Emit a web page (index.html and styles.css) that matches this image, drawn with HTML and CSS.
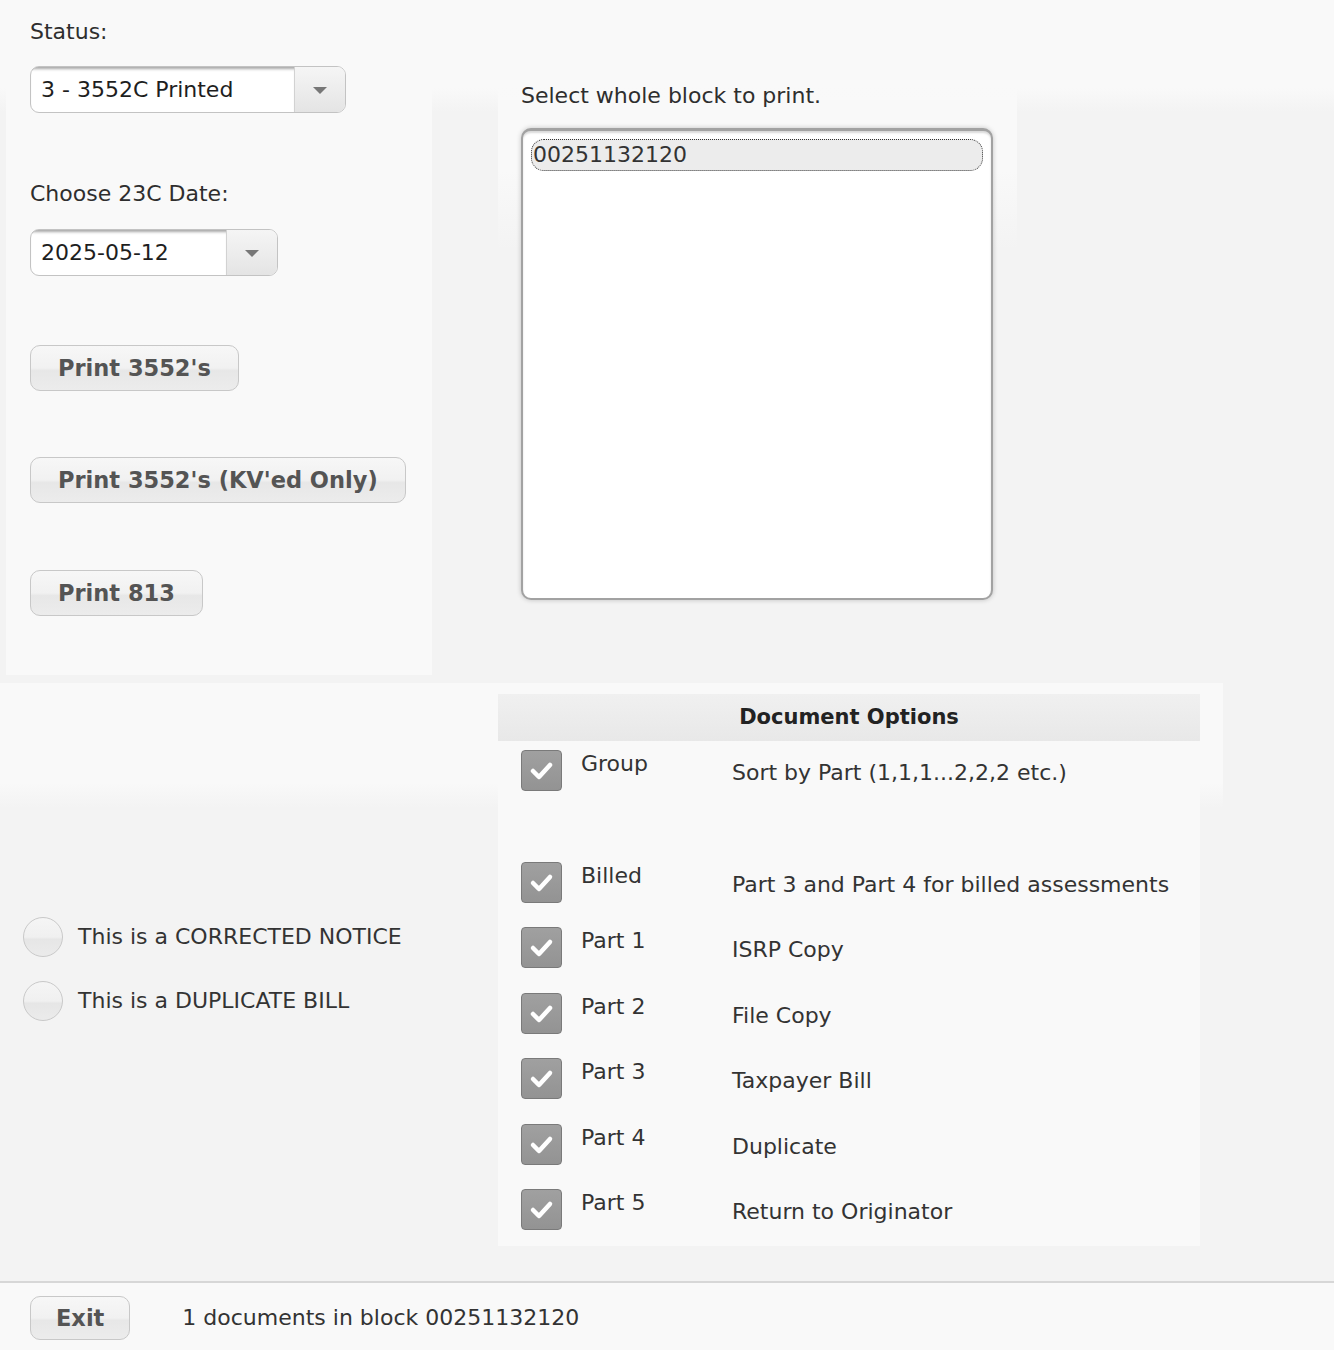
FILE: index.html
```html
<!DOCTYPE html>
<html>
<head>
<meta charset="utf-8">
<link rel="stylesheet" href="styles.css">
</head>
<body>
<div class="page">
  <div class="upper">
    <section class="left-panel">
      <div class="label label-status">Status:</div>
      <div class="select select-status">
        <span class="select-value">3 - 3552C Printed</span>
        <span class="select-arrow"><svg width="16" height="8" viewBox="0 0 16 8"><path d="M1 0 L15 0 L8 7 Z" fill="#777"/></svg></span>
      </div>
      <div class="label label-date">Choose 23C Date:</div>
      <div class="select select-date">
        <span class="select-value">2025-05-12</span>
        <span class="select-arrow"><svg width="16" height="8" viewBox="0 0 16 8"><path d="M1 0 L15 0 L8 7 Z" fill="#777"/></svg></span>
      </div>
      <button class="btn btn-first">Print 3552's</button>
      <button class="btn btn-gap">Print 3552's (KV'ed Only)</button>
      <button class="btn btn-gap3">Print 813</button>
    </section>
    <section class="block-panel">
      <div class="label">Select whole block to print.</div>
      <div class="listbox">
        <div class="list-item">00251132120</div>
      </div>
    </section>
  </div>

  <div class="middle">
    <div class="radios">
      <label class="radio-row"><span class="radio"></span><span>This is a CORRECTED NOTICE</span></label>
      <label class="radio-row"><span class="radio"></span><span>This is a DUPLICATE BILL</span></label>
    </div>
    <div class="doc-options">
      <div class="doc-header">Document Options</div>
      <div class="opt-row opt-group">
        <span class="check"><svg width="41" height="41" viewBox="0 0 41 41"><path d="M12 21 L18 27 L29 15" fill="none" stroke="#fff" stroke-width="4.5" stroke-linecap="round" stroke-linejoin="round"/></svg></span>
        <span class="opt-name">Group</span>
        <span class="opt-desc">Sort by Part (1,1,1...2,2,2 etc.)</span>
      </div>
      <div class="opt-row">
        <span class="check"><svg width="41" height="41" viewBox="0 0 41 41"><path d="M12 21 L18 27 L29 15" fill="none" stroke="#fff" stroke-width="4.5" stroke-linecap="round" stroke-linejoin="round"/></svg></span>
        <span class="opt-name">Billed</span>
        <span class="opt-desc">Part 3 and Part 4 for billed assessments</span>
      </div>
      <div class="opt-row">
        <span class="check"><svg width="41" height="41" viewBox="0 0 41 41"><path d="M12 21 L18 27 L29 15" fill="none" stroke="#fff" stroke-width="4.5" stroke-linecap="round" stroke-linejoin="round"/></svg></span>
        <span class="opt-name">Part 1</span>
        <span class="opt-desc">ISRP Copy</span>
      </div>
      <div class="opt-row">
        <span class="check"><svg width="41" height="41" viewBox="0 0 41 41"><path d="M12 21 L18 27 L29 15" fill="none" stroke="#fff" stroke-width="4.5" stroke-linecap="round" stroke-linejoin="round"/></svg></span>
        <span class="opt-name">Part 2</span>
        <span class="opt-desc">File Copy</span>
      </div>
      <div class="opt-row">
        <span class="check"><svg width="41" height="41" viewBox="0 0 41 41"><path d="M12 21 L18 27 L29 15" fill="none" stroke="#fff" stroke-width="4.5" stroke-linecap="round" stroke-linejoin="round"/></svg></span>
        <span class="opt-name">Part 3</span>
        <span class="opt-desc">Taxpayer Bill</span>
      </div>
      <div class="opt-row">
        <span class="check"><svg width="41" height="41" viewBox="0 0 41 41"><path d="M12 21 L18 27 L29 15" fill="none" stroke="#fff" stroke-width="4.5" stroke-linecap="round" stroke-linejoin="round"/></svg></span>
        <span class="opt-name">Part 4</span>
        <span class="opt-desc">Duplicate</span>
      </div>
      <div class="opt-row opt-last">
        <span class="check"><svg width="41" height="41" viewBox="0 0 41 41"><path d="M12 21 L18 27 L29 15" fill="none" stroke="#fff" stroke-width="4.5" stroke-linecap="round" stroke-linejoin="round"/></svg></span>
        <span class="opt-name">Part 5</span>
        <span class="opt-desc">Return to Originator</span>
      </div>
    </div>
  </div>

  <footer class="footer">
    <button class="btn btn-exit">Exit</button>
    <span class="footer-text">1 documents in block 00251132120</span>
  </footer>
</div>
</body>
</html>
```

FILE: styles.css
```css
* { box-sizing: border-box; }

html, body {
  margin: 0;
  padding: 0;
}

body {
  background: #f3f3f3;
  font-family: "DejaVu Sans", "Liberation Sans", sans-serif;
  font-size: 22px;
  line-height: 26px;
  color: #2e2e2e;
}

.page {
  width: 1334px;
  height: 1350px;
  overflow: hidden;
}

/* ---------- upper area ---------- */
.upper {
  display: flex;
  height: 683px;
  background: linear-gradient(to bottom, #f9f9f9 0, #f9f9f9 88px, #f3f3f3 112px);
}

.left-panel {
  margin-left: 6px;
  width: 426px;
  height: 675px;
  background: #f9f9f9;
  padding: 19px 0 0 24px;
  display: flex;
  flex-direction: column;
  align-items: flex-start;
}

.label {
  color: #2e2e2e;
  white-space: nowrap;
}

.label-date { margin-top: 68px; }

.select {
  display: flex;
  height: 47px;
  margin-top: 21px;
  background: #fff;
  border: 1px solid #c3c3c3;
  border-radius: 9px;
  overflow: hidden;
}

.select-date { margin-top: 22px; }

.select-status { width: 316px; }
.select-date { width: 248px; }

.select-value {
  flex: 1;
  padding-left: 10px;
  display: flex;
  align-items: center;
  color: #1e1e1e;
  box-shadow: inset 0 4px 3px -2px rgba(0, 0, 0, 0.35);
}

.select-arrow {
  width: 51px;
  display: flex;
  align-items: center;
  justify-content: center;
  border-left: 1px solid #d2d2d2;
  background: linear-gradient(to bottom, #f5f5f5 0%, #ececec 55%, #e4e4e4 100%);
}

.select-arrow svg { display: block; margin-top: 2px; }

.btn {
  font-family: "DejaVu Sans", "Liberation Sans", sans-serif;
  font-size: 22.5px;
  font-weight: bold;
  color: #545454;
  height: 46px;
  padding: 0 27px;
  border: 1px solid #c8c8c8;
  border-radius: 10px;
  background: linear-gradient(to bottom, #f7f7f7 0%, #f1f1f1 50%, #e7e7e7 56%, #ececec 100%);
  line-height: 44px;
  white-space: nowrap;
  cursor: pointer;
}

.btn-first { margin-top: 69px; }
.btn-gap { margin-top: 66px; }
.btn-gap3 { margin-top: 67px; }

/* ---------- block list ---------- */
.block-panel {
  margin-left: 66px;
  width: 519px;
  height: 300px;
  padding: 83px 0 0 23px;
  background: linear-gradient(to bottom, rgba(249,249,249,0) 0, #f9f9f9 100px, #f9f9f9 170px, rgba(249,249,249,0) 250px);
}

.listbox {
  margin-top: 19px;
  width: 472px;
  height: 472px;
  background: #fff;
  border: 2px solid #a2a2a2;
  border-top-width: 3px;
  border-radius: 10px;
  box-shadow: 0 0 5px rgba(0, 0, 0, 0.22), inset 0 2px 2px rgba(0, 0, 0, 0.15);
  padding: 8px 8px 0 8px;
}

.list-item {
  height: 32px;
  line-height: 30px;
  padding-left: 1px;
  background: #ececec;
  border: 1px dotted #333;
  border-radius: 13px;
  color: #333;
}

/* ---------- middle ---------- */
.middle {
  display: flex;
  height: 598px;
  background: linear-gradient(to bottom, #f9f9f9 0, #f9f9f9 100px, #f3f3f3 125px) no-repeat;
  background-size: 1223px 100%;
}

.radios {
  width: 498px;
  padding: 234px 0 0 23px;
  display: flex;
  flex-direction: column;
  gap: 24px;
}

.radio-row {
  display: flex;
  align-items: center;
  gap: 15px;
  color: #333;
  white-space: nowrap;
}

.radio {
  width: 40px;
  height: 40px;
  border-radius: 50%;
  border: 1px solid #c9c9c9;
  background: linear-gradient(to bottom, #f5f5f5 0%, #f0f0f0 50%, #e6e6e6 56%, #ebebeb 100%);
  flex: none;
}

.doc-options {
  margin-top: 11px;
  width: 702px;
  height: 552px;
  background: #f9f9f9;
}

.doc-header {
  height: 47px;
  line-height: 47px;
  text-align: center;
  font-weight: bold;
  font-size: 21px;
  color: #222;
  background: linear-gradient(to bottom, #f0f0f0 0%, #e8e8e8 100%);
  margin-bottom: 9px;
}

.opt-row {
  display: grid;
  grid-template-columns: 41px 132px 1fr;
  column-gap: 19px;
  padding-left: 23px;
  height: 65.4px;
  align-items: start;
  white-space: nowrap;
}

.opt-group { height: 112px; }

.check {
  width: 41px;
  height: 41px;
  border: 1px solid #7a7a7a;
  border-radius: 4px;
  background: linear-gradient(to bottom, #a0a0a0, #939393);
  display: block;
  position: relative;
}

.check svg {
  position: absolute;
  left: -1px;
  top: -1px;
}

.opt-name {
  padding-top: 1px;
  color: #333;
}

.opt-desc {
  padding-top: 10px;
  color: #333;
}

/* ---------- footer ---------- */
.footer {
  border-top: 2px solid #d7d7d7;
  background: #f9f9f9;
  height: 69px;
  display: flex;
  align-items: center;
  padding: 3px 0 0 30px;
  gap: 52px;
}

.btn-exit {
  height: 44px;
  line-height: 42px;
  padding: 0 25px;
}

.footer-text {
  color: #333;
}
```
